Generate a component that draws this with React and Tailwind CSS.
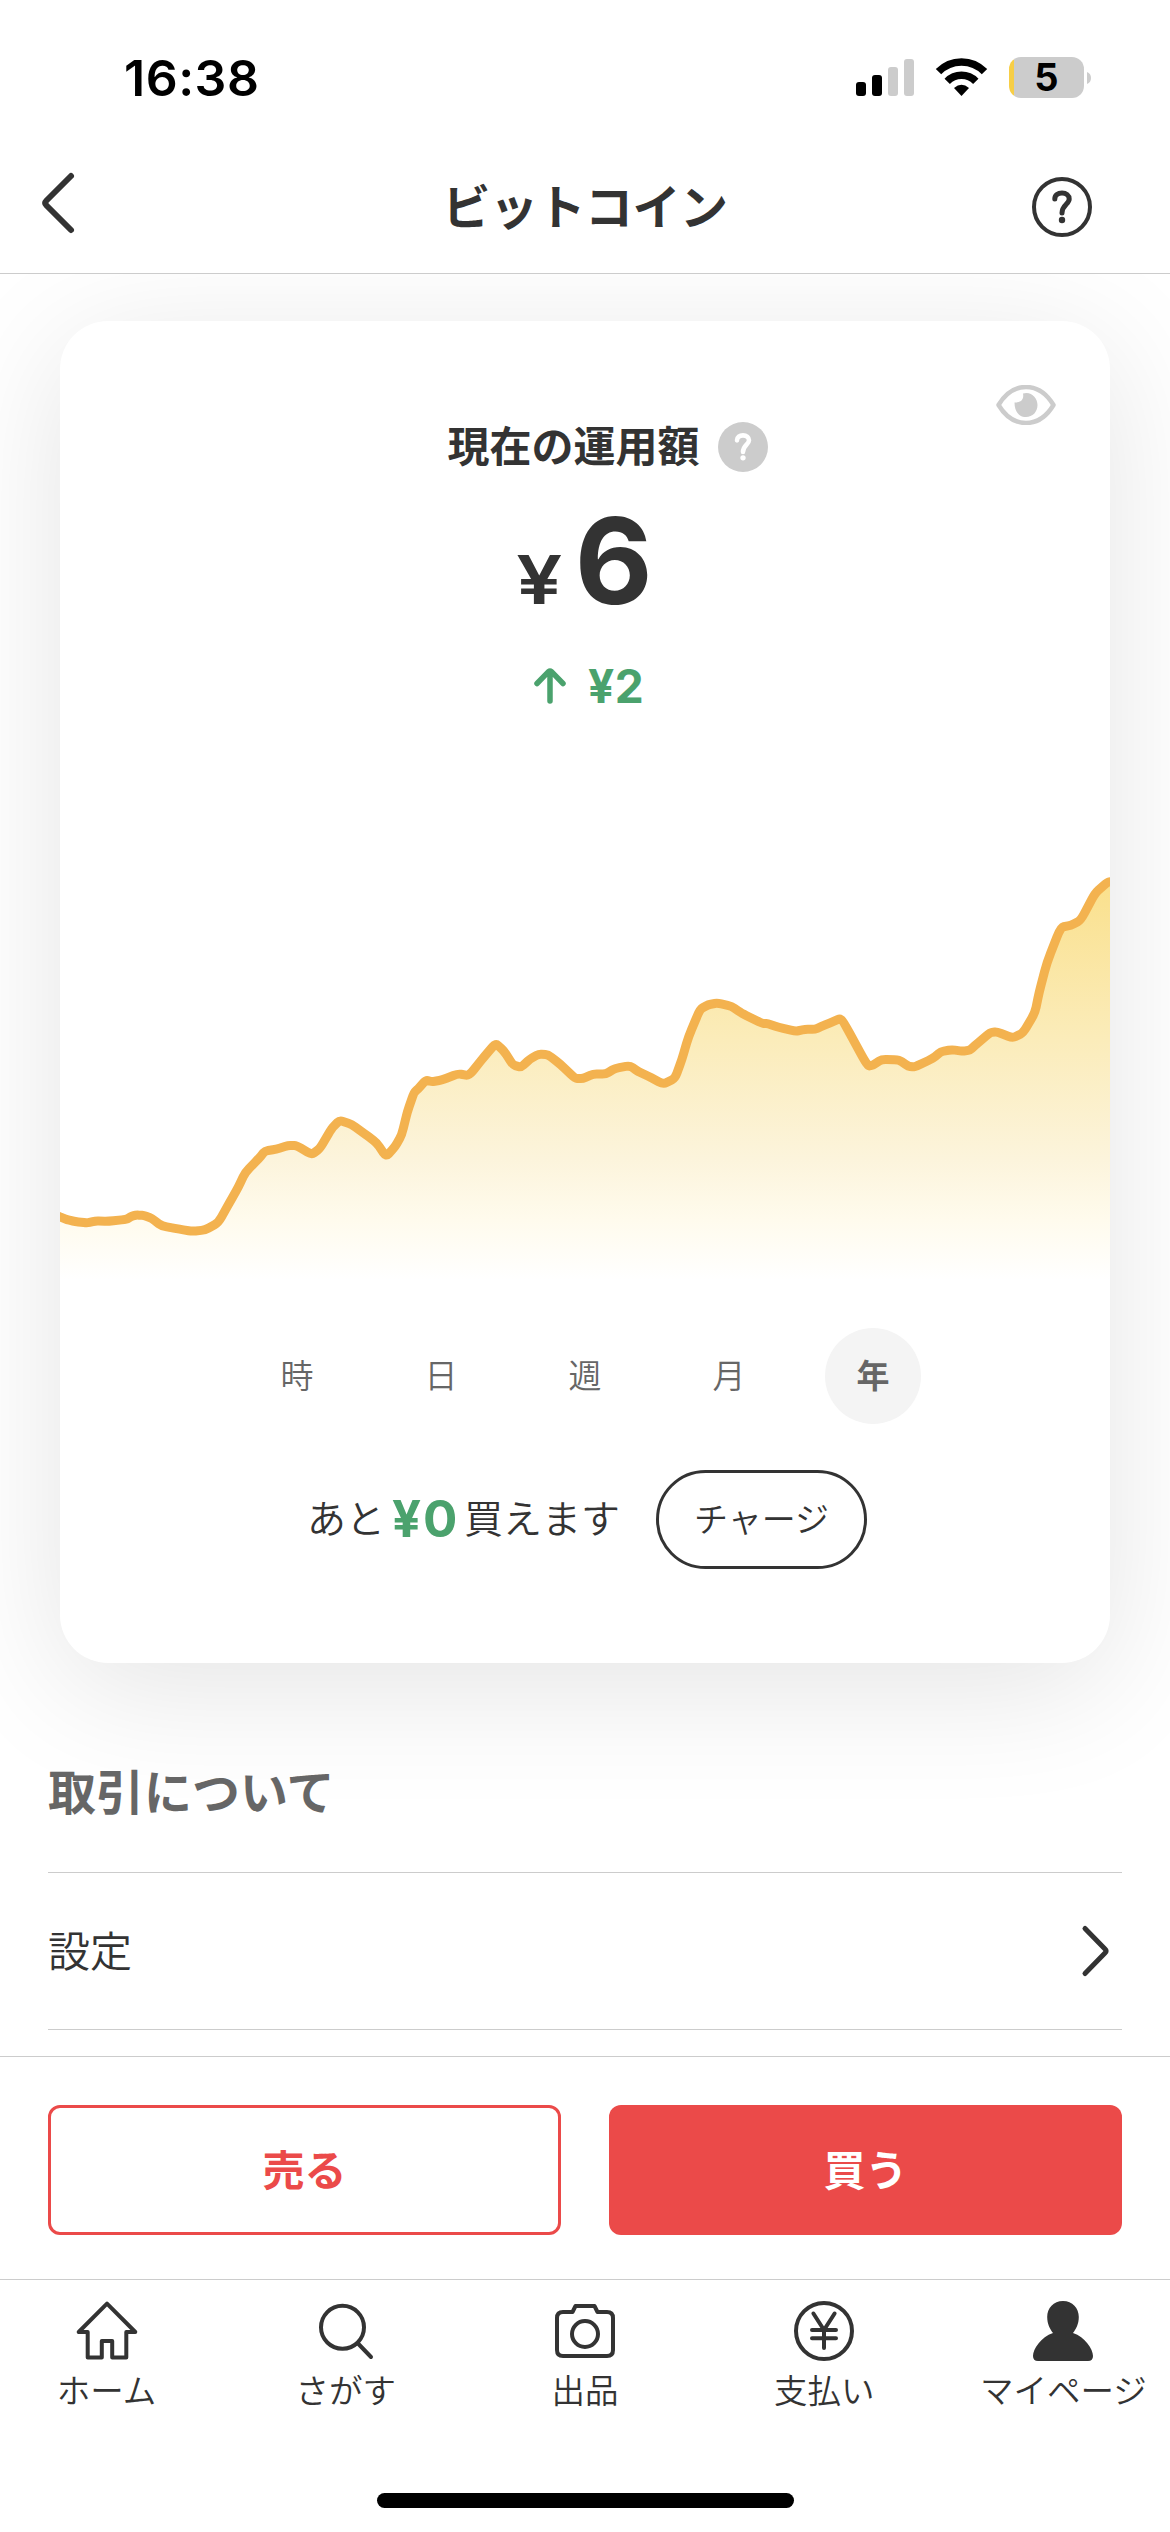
import React from "react";

const PRICE_POINTS = [
  [55, 1215], [60, 1216.7], [67, 1219.7], [75, 1221.5], [87.3, 1223], [95, 1221], [108.3, 1221.3], [126.7, 1219.3], [132, 1216],
  [137, 1215], [144, 1215.5], [151.7, 1218.3], [161.7, 1226], [180, 1229.3], [192, 1231.3], [205, 1230], [218.3, 1222.7],
  [230, 1201.7], [238.3, 1187.3], [245, 1172.7], [259.3, 1158], [265, 1151], [276, 1149.3], [288.3, 1145.3],
  [296.7, 1145.7], [311.7, 1154.7], [320, 1148.3], [331.7, 1128.3], [339.7, 1120.3], [351.7, 1124.3], [365, 1134],
  [376.7, 1142.7], [386, 1156.7], [395, 1146.7], [401.7, 1135], [407.3, 1112], [414, 1092.5], [418, 1089], [426, 1080],
  [432, 1081.7], [442, 1080], [458, 1073.7], [469, 1075.7], [485, 1055.7], [495.7, 1043.3], [504, 1051], [513, 1065],
  [521, 1067.3], [530, 1059], [539, 1054], [548, 1054.7], [560, 1064], [575, 1078.3], [582.7, 1078.7], [593, 1074],
  [606, 1074], [615, 1068.3], [630, 1065.7], [638.3, 1071.7], [646.7, 1075.3], [663.3, 1084.3], [675, 1078.3],
  [681.7, 1060], [688.3, 1037.3], [700, 1009.3], [708.3, 1004.7], [717.3, 1003], [731.7, 1006.3], [740.7, 1012.7],
  [761.7, 1023.3], [768, 1023.7], [778.3, 1027.3], [795.7, 1031.3], [805, 1029.3], [815, 1029.3], [823.3, 1025.7],
  [832, 1022], [839.7, 1018.7], [843, 1021], [867.7, 1066.3], [873, 1065], [881.7, 1059.3], [899.3, 1060],
  [908.3, 1066.3], [914.3, 1067], [933.3, 1058.3], [940.7, 1051.7], [951.7, 1049.7], [963.3, 1051.3], [970, 1050],
  [976.7, 1044], [990, 1032.7], [996.7, 1031.7], [1012.7, 1038], [1023.3, 1032.7], [1035, 1012.7], [1039, 993], [1046.7, 963.3],
  [1060.7, 927.3], [1070.7, 925.3], [1080.7, 920.3], [1095, 893.3], [1107.3, 882.3], [1114, 881],
];

// Rounds each vertex of the series with a short quadratic; T is the share of each segment that bends.
const T = 0.28;
function smoothLine(points) {
  let d = `M${points[0][0]} ${points[0][1]}`;
  for (let i = 1; i < points.length - 1; i++) {
    const [px, py] = points[i - 1];
    const [x, y] = points[i];
    const [nx, ny] = points[i + 1];
    d += `L${x + (px - x) * T} ${y + (py - y) * T}Q${x} ${y} ${x + (nx - x) * T} ${y + (ny - y) * T}`;
  }
  const last = points[points.length - 1];
  return `${d}L${last[0]} ${last[1]}`;
}

const LINE = smoothLine(PRICE_POINTS);

function PriceChart() {
  return (
    <svg viewBox="60 860 1050 430" className="block h-[430px] w-[1050px]" fill="none">
      <defs>
        <linearGradient id="area" gradientUnits="userSpaceOnUse" x1="0" y1="880" x2="0" y2="1280">
          <stop offset="0" stopColor="#fae08c" />
          <stop offset="0.4" stopColor="#fbecba" />
          <stop offset="0.7" stopColor="#fcf4dc" />
          <stop offset="0.85" stopColor="#fffbed" />
          <stop offset="1" stopColor="#ffffff" />
        </linearGradient>
      </defs>
      <path d={`${LINE}V1282H55Z`} fill="url(#area)" />
      <path d={LINE} stroke="#f3b24f" strokeWidth="9" strokeLinejoin="round" />
    </svg>
  );
}

function StatusIcons() {
  return (
    <div className="flex h-[41px] items-center">
      <svg viewBox="0 0 132 41" className="h-[41px] w-[132px]">
        <rect x="0" y="25" width="10" height="14" rx="3" />
        <rect x="16" y="18" width="10" height="21" rx="3" />
        <rect x="32" y="10" width="10" height="29" rx="3" fill="#ccc" />
        <rect x="48" y="2" width="10" height="37" rx="3" fill="#ccc" />
        <g fill="none" stroke="#000" strokeWidth="7.5">
          <path d="M82.500 14.700A32 32 0 0 1 128.500 14.700" />
          <path d="M91.200 24.300A20 20 0 0 1 119.800 24.300" />
        </g>
        <path d="M98 31Q105.500 24.500 113 31L105.500 39Z" />
      </svg>
      <div className="ml-[21px] flex h-[41px] w-[75px] items-center justify-center rounded-[12px] bg-[linear-gradient(90deg,#f7ce46_4.5px,#ccc_4.5px)] text-[38px] font-bold leading-[41px]">5</div>
      <svg viewBox="0 0 4 12" className="ml-[3px] h-[12px] w-[4px]">
        <path d="M0 0Q4 1.500 4 6T0 12Z" fill="#ccc" />
      </svg>
    </div>
  );
}

function QuestionMark({ className, color, width }) {
  return (
    <svg viewBox="-30 -30 60 60" className={className} fill="none" stroke={color} strokeWidth={width} strokeLinecap="round" strokeLinejoin="round">
      <path d="M-7.200 -8C-7.200 -12 -4 -14 0 -14C4.200 -14 7.200 -11.500 7.200 -8C7.200 -3 0 -2 0 6" />
      <circle cx="0" cy="13" r="3.200" fill={color} stroke="none" />
    </svg>
  );
}

function Header() {
  return (
    <header className="relative z-10 h-[274px] border-b border-[#ccc] bg-white">
      <div className="flex h-[141px] items-start justify-between pl-[124px] pr-[79px] text-black">
        <div className="mt-[47px] text-[50px] font-semibold leading-[62px] tracking-[0.5px]">16:38</div>
        <div className="mt-[57px]"><StatusIcons /></div>
      </div>
      <div className="grid h-[132px] grid-cols-[200px_1fr_200px] items-center">
        <svg viewBox="0 0 44 66" className="-mt-2 ml-[36px] h-[66px] w-[44px]" fill="none" stroke="#333" strokeWidth="6" strokeLinecap="round" strokeLinejoin="round">
          <path d="M35 6L10.500 30.500Q8 33 10.500 35.500L35 60" />
        </svg>
        <h1 className="mt-[2px] text-center text-[48px] font-bold leading-[60px] tracking-[-0.5px]">ビットコイン</h1>
        <div className="ml-[62px] flex size-[60px] items-center justify-center rounded-full border-4 border-[#333]">
          <QuestionMark className="size-[60px] shrink-0" color="#333" width="5" />
        </div>
      </div>
    </header>
  );
}

function Card() {
  const tabs = ["時", "日", "週", "月", "年"];
  return (
    <section className="relative mx-[60px] mt-[47px] h-[1342px] rounded-[48px] bg-white shadow-[0_24px_130px_rgba(0,0,0,0.11)]">
      <svg viewBox="-30 -20 60 40" className="absolute right-[54px] top-[64px] h-[40px] w-[60px]" fill="none">
        <path d="M-27.500 0C-13 -24 13 -24 27.500 0C13 24 -13 24 -27.500 0Z" stroke="#ccc" strokeWidth="4.500" strokeLinejoin="round" />
        <path d="M-3 -11.500C5 -14 11.500 -7.500 11.500 0C11.500 7 6.500 12 0 12C-6.500 12 -11.500 7 -11.500 -2.500C-7 -2 -1.500 -4 -3 -11.500Z" fill="#ccc" />
      </svg>
      <div className="flex h-[252px] items-center justify-center gap-[18px] pl-[45px]">
        <h2 className="text-[42px] font-bold leading-[50px]">現在の運用額</h2>
        <div className="flex size-[50px] items-center justify-center rounded-full bg-[#ccc]">
          <QuestionMark className="size-[50px]" color="#fff" width="5.500" />
        </div>
      </div>
      <div className="-mt-[61px] flex h-[98px] items-baseline justify-center gap-[16px] pl-[3px]">
        <span className="inline-block scale-x-[1.2] text-[68px] font-semibold leading-[98px]">¥</span>
        <span className="text-[120px] font-bold leading-[98px]">6</span>
      </div>
      <div className="mt-[50px] flex h-[52px] items-center justify-center gap-[22px] pl-[8px] text-[#4ba26d]">
        <svg viewBox="0 0 32 36" className="h-[36px] w-[32px]" fill="none" stroke="currentColor" strokeWidth="5.500" strokeLinecap="round" strokeLinejoin="round">
          <path d="M16 33V4M3 15.500L14.500 3.700Q16 2.500 17.500 3.700L29 15.500" />
        </svg>
        <span className="text-[46px] font-bold leading-[52px] tracking-[0.5px]">¥2</span>
      </div>
      <div className="mt-[148px]"><PriceChart /></div>
      <nav className="mt-[38px] flex justify-center gap-[48px]">
        {tabs.map((t) => (
          <div key={t} className={t === "年" ? "flex size-[96px] items-center justify-center rounded-full bg-[#f4f4f4] text-[33px] font-bold leading-[36px] text-[#666]" : "flex size-[96px] items-center justify-center text-[33px] font-[350] leading-[36px] text-[#666]"}>{t}</div>
        ))}
      </nav>
      <div className="ml-[247px] mt-[46px] flex h-[99px] items-center text-[39px] font-[350]">
        <span className="w-[85px]">あと</span>
        <span className="w-[72px] text-[51px] font-bold tracking-[2px] text-[#4ba26d]">¥0</span>
        <span className="w-[192px]">買えます</span>
        <button className="h-[99px] w-[211px] rounded-full border-3 border-[#333] text-[34px]">チャージ</button>
      </div>
    </section>
  );
}

const stroke4 = { fill: "none", stroke: "#333", strokeWidth: 4, strokeLinecap: "round", strokeLinejoin: "round" };

const NAV = [
  ["ホーム", <path {...stroke4} d="M0 -27.300L-28.300 1H-19.300V26.500H-5.200V10H5.200V26.500H19.300V1H28.300Z" />],
  ["さがす", <g {...stroke4}><circle cx="-3.500" cy="-3.700" r="21.500" /><path d="M12.500 13L25 26" /></g>],
  ["出品", <g {...stroke4}><path d="M-22 -19H-12.500L-9.500 -25H9.500L12.500 -19H22Q28 -19 28 -13V19Q28 25 22 25H-22Q-28 25 -28 19V-13Q-28 -19 -22 -19Z" /><circle cx="0" cy="3" r="13" /></g>],
  ["支払い", <g {...stroke4}><circle cx="0" cy="0" r="28" /><path d="M-10.600 -17.500L0 -1L10.600 -17.500M0 -1V17M-12 -1H12M-12 7.300H12" /></g>],
  ["マイページ", <path fill="#333" d="M0 -30C9.500 -30 15.800 -23 15.800 -14C15.800 -7 13 -2 10 2C22 6 30 18 30 25Q30 30 25 30H-25Q-30 30 -30 25C-30 18 -22 6 -10 2C-13 -2 -15.800 -7 -15.800 -14C-15.800 -23 -9.500 -30 0 -30Z" />],
];

export default function App() {
  return (
    <div className="flex h-[2532px] w-[1170px] flex-col overflow-hidden bg-white font-['Inter','Noto_Sans_CJK_JP',sans-serif] text-[#333]">
      <Header />
      <main className="h-[1782px] overflow-hidden">
        <Card />
        <div className="relative px-[48px]">
          <h2 className="flex h-[209px] items-end pb-[49px] text-[48px] font-bold leading-[60px] text-[#666]">取引について</h2>
          <div className="flex h-[158px] items-center justify-between border-y border-[#ccc] pr-[10px]">
            <span className="text-[42px] font-[350]">設定</span>
            <svg viewBox="0 0 34 54" className="h-[54px] w-[34px]" fill="none" stroke="#333" strokeWidth="5" strokeLinecap="round" strokeLinejoin="round">
              <path d="M7 4.500L27 25Q29 27 27 29L7 49.500" />
            </svg>
          </div>
        </div>
      </main>
      <div className="grid h-[223px] grid-cols-2 gap-[48px] border-t border-[#ccc] px-[48px] pt-[48px]">
        <button className="h-[130px] rounded-[12px] border-3 border-[#eb4a49] text-[42px] font-bold text-[#eb4a49]">売る</button>
        <button className="h-[130px] rounded-[12px] bg-[#eb4a49] text-[42px] font-bold text-white">買う</button>
      </div>
      <footer className="h-[253px] border-t border-[#ccc]">
        <nav className="mx-[-13px] flex">
          {NAV.map(([label, icon]) => (
            <div key={label} className="flex w-0 flex-1 flex-col items-center">
              <svg viewBox="-32 -32 64 64" className="mt-[19px] size-[64px]">{icon}</svg>
              <span className="mt-[4px] whitespace-nowrap text-[33.5px] font-[350] leading-[48px]">{label}</span>
            </div>
          ))}
        </nav>
        <div className="mx-auto mt-[78px] h-[15px] w-[417px] rounded-full bg-black" />
      </footer>
    </div>
  );
}
